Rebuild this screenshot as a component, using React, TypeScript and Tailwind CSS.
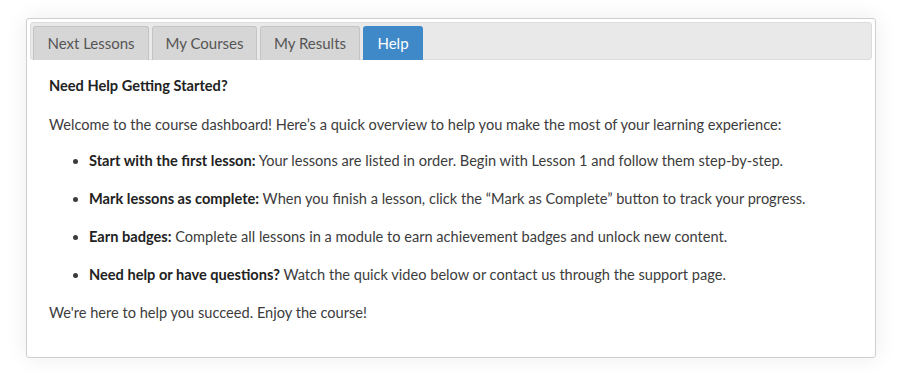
import React from "react";

const tabs = [
  { label: "Next Lessons", w: "w-[116px]" },
  { label: "My Courses", w: "w-[105px]" },
  { label: "My Results", w: "w-[100px]" },
];

export default function App() {
  return (
    <div className="w-[904px] h-[373px] bg-white pt-[18px] pl-[26px]" style={{ fontFamily: "Lato, 'Open Sans', sans-serif" }}>
      <div className="w-[850px] h-[340px] border border-[#cfcfcf] rounded-[3px] bg-white p-[3px] shadow-[0_0_22px_rgba(0,0,0,0.08)]">
        <div className="h-[38px] border border-[#dcdcdc] rounded-[3px] bg-[#e9e9e9] pl-[2px] pt-[3px] flex gap-[3px]">
          {tabs.map((t) => (
            <div
              key={t.label}
              className={`${t.w} h-[34px] border border-b-0 border-[#c4c4c4] rounded-t-[3px] bg-[#d6d6d6] text-[#555] text-[15px] flex items-center justify-center`}
            >
              {t.label}
            </div>
          ))}
          <div className="w-[60px] h-[34px] rounded-t-[3px] bg-[#3f89c9] text-white text-[15px] flex items-center justify-center">
            Help
          </div>
        </div>
        <div className="pl-[19px] pt-[16px] text-[14.6px] leading-[20px] text-[#3c3c3c]">
          <p className="font-bold text-[#222]">Need Help Getting Started?</p>
          <p className="mt-[19px]">
            Welcome to the course dashboard! Here’s a quick overview to help you make the most of your learning experience:
          </p>
          <ul className="list-disc pl-[40px] mt-[16px] flex flex-col gap-[18px]">
            <li>
              <span className="font-bold text-[#222]">Start with the first lesson:</span> Your lessons are listed in order. Begin with Lesson 1 and follow them step-by-step.
            </li>
            <li>
              <span className="font-bold text-[#222]">Mark lessons as complete:</span> When you finish a lesson, click the “Mark as Complete” button to track your progress.
            </li>
            <li>
              <span className="font-bold text-[#222]">Earn badges:</span> Complete all lessons in a module to earn achievement badges and unlock new content.
            </li>
            <li>
              <span className="font-bold text-[#222]">Need help or have questions?</span> Watch the quick video below or contact us through the support page.
            </li>
          </ul>
          <p className="mt-[18px]">We're here to help you succeed. Enjoy the course!</p>
        </div>
      </div>
    </div>
  );
}
